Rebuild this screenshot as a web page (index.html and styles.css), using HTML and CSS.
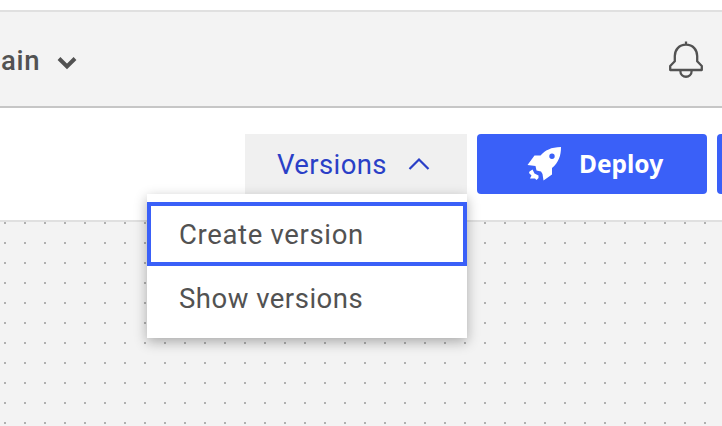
FILE: index.html
```html
<!DOCTYPE html>
<html lang="en">
<head>
<meta charset="utf-8">
<title>Versions</title>
<link rel="stylesheet" href="styles.css">
</head>
<body>
<header class="header">
  <div class="branch"><span class="branch-name">ain</span>
    <svg class="branch-chevron" width="20" height="14" viewBox="0 0 20 14"><path d="M2 2.500 10 10.500 18 2.500" fill="none" stroke="#525252" stroke-width="4"/></svg>
  </div>
  <svg class="bell" width="34" height="38" viewBox="0 0 34 38" fill="none" stroke="#525252" stroke-width="2.300" stroke-linejoin="round"><path d="M17 .5v4M17 3.700C10 3.700 5.800 9 5.800 15V20.300L1.200 25V29H32.800V25L28.200 20.300V15C28.200 9 24 3.700 17 3.700ZM11.300 29.500C11.300 37.800 22.700 37.800 22.700 29.500"/></svg>
</header>
<div class="toolbar">
  <div class="versions">
    <button class="button versions-button"><span class="versions-label">Versions</span>
      <svg width="22" height="14" viewBox="0 0 22 14"><path d="M1.500 12 11 2.500 20.500 12" fill="none" stroke="#2a3fc7" stroke-width="2.200"/></svg>
    </button>
    <ul class="menu">
      <li class="menu-item menu-item-focused"><span class="create-label">Create version</span></li>
      <li class="menu-item"><span class="show-label">Show versions</span></li>
    </ul>
  </div>
  <button class="button primary deploy">
    <svg width="36" height="36" viewBox="0 0 36 36"><path fill="#fff" fill-rule="evenodd" d="M34 1C24 1 18 4.500 13.500 9.500H7.500L.5 19 8.500 20 9.500 24.500 14 25.500 15.500 28 16.500 34.500 25 28.500V22C31.500 16.500 34 10 34 1ZM25 7.600a2.700 2.700 0 1 1 0 5.400a2.700 2.700 0 1 1 0-5.400ZM5.500 23.500 7.500 27.500 11.500 29.500 11.500 32 9.500 34 8 32.500 3 32.500 4.500 29.500 2 27 2.500 25.500Z"/></svg>
    <span class="deploy-label">Deploy</span>
  </button>
  <button class="button primary next" aria-label="More"></button>
</div>
<main class="canvas"></main>
</body>
</html>
```
FILE: styles.css
```css
* { box-sizing: border-box; }
body {
  margin: 0;
  height: 426px;
  padding-top: 10px;
  display: flex;
  flex-direction: column;
  overflow: hidden;
  background: #fff;
  color: #525252;
  font: 27.5px/36px Roboto, "Liberation Sans", sans-serif;
}
svg { display: block; flex: none; }
.header {
  flex: none;
  height: 98px;
  display: flex;
  justify-content: space-between;
  background: #f3f3f3;
  border-top: 2px solid #e0e0e0;
  border-bottom: 2px solid #c6c6c6;
}
.branch { display: flex; padding: 31px 0 0 1px; }
.branch-name { width: 56px; font-weight: 500; letter-spacing: .7px; }
.branch-chevron { margin-top: 13px; }
.bell { margin: 29px 19px 0 0; }
.toolbar {
  flex: none;
  height: 114px;
  display: flex;
  gap: 10px;
  padding: 26px 0 0 245px;
  border-bottom: 2px solid #e0e0e0;
}
.button {
  height: 60px;
  display: flex;
  align-items: center;
  border: 0;
  font: inherit;
}
.versions { position: relative; flex: none; width: 222px; }
.versions-button {
  width: 100%;
  padding: 0 0 0 32px;
  background: #f0f0f0;
  color: #2a3fc7;
}
.versions-label { width: 131px; padding-top: 2px; text-align: left; letter-spacing: .4px; }
.primary { flex: none; background: #3a60f8; color: #fff; border-radius: 4px; }
.deploy { width: 230px; padding: 0 0 0 50px; }
.deploy-label { margin-left: 16px; font: 700 24.5px/36px "Noto Sans", sans-serif; }
.next { flex: 1; padding: 0; border-radius: 4px 0 0 4px; }
.menu {
  position: absolute;
  top: 60px;
  right: 0;
  z-index: 1;
  width: 320px;
  height: 144px;
  margin: 0;
  padding: 8px 0;
  list-style: none;
  background: #fff;
  box-shadow: 0 4px 12px rgba(0, 0, 0, .3);
}
.menu-item { height: 64px; padding: 11px 28px; border: 4px solid transparent; white-space: nowrap; }
.menu-item-focused { border-color: #3a60f8; }
.create-label { letter-spacing: .65px; }
.show-label { letter-spacing: .5px; }
.canvas {
  flex: 1;
  background: conic-gradient(at 2px 2px, transparent 75%, #b0b0b0 75%) 4px 0 / 20px 20px;
  background-color: #f3f3f3;
}
```
